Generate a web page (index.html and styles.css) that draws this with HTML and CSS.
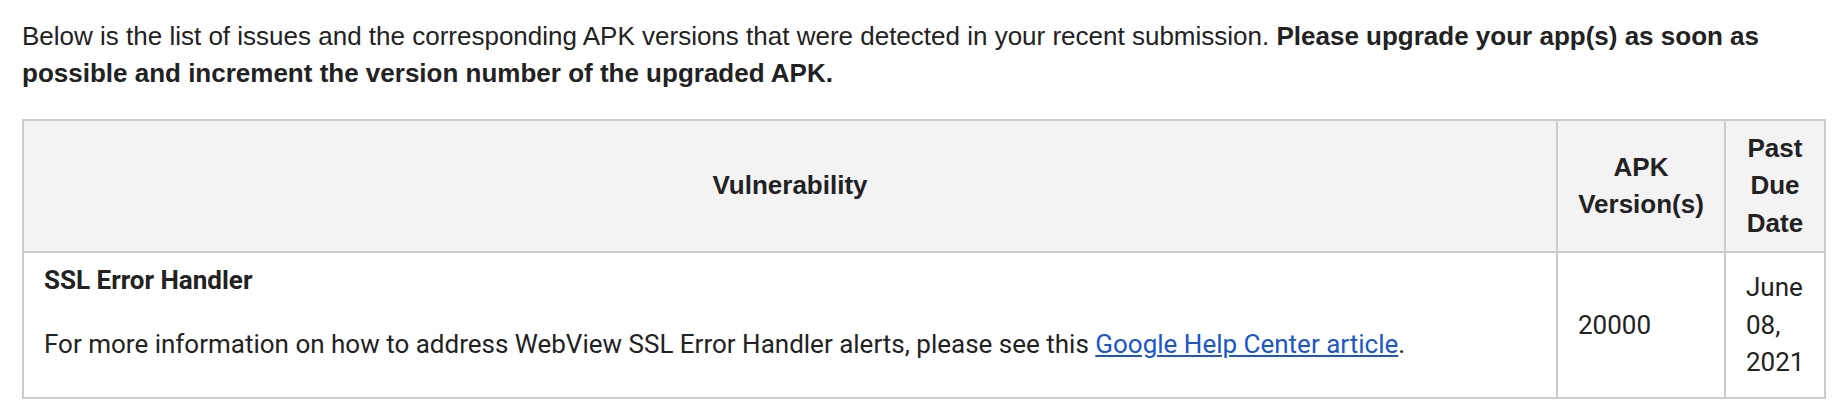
FILE: index.html
```html
<!DOCTYPE html>
<html lang="en">
<head>
<meta charset="utf-8">
<title>Issues</title>
<link rel="stylesheet" href="styles.css">
</head>
<body>
<div class="page">
  <p class="intro">Below is the list of issues and the corresponding APK versions that were detected in your recent submission. <strong>Please upgrade your app(s) as soon as possible and increment the version number of the upgraded APK.</strong></p>
  <table class="issues">
    <colgroup>
      <col class="col-vuln">
      <col class="col-apk">
      <col class="col-date">
    </colgroup>
    <thead>
      <tr>
        <th>Vulnerability</th>
        <th>APK Version(s)</th>
        <th>Past Due Date</th>
      </tr>
    </thead>
    <tbody>
      <tr>
        <td class="cell-vuln">
          <h4 class="vuln-title">SSL Error Handler</h4>
          <p class="vuln-text">For more information on how to address WebView SSL Error Handler alerts, please see this <a href="#">Google Help Center article</a>.</p>
        </td>
        <td class="cell-apk">20000</td>
        <td class="cell-date">June 08, 2021</td>
      </tr>
    </tbody>
  </table>
</div>
</body>
</html>
```

FILE: styles.css
```css
html, body {
  margin: 0;
  padding: 0;
  background: #ffffff;
}

.page {
  padding: 0 18px 0 22px;
  color: #222222;
  font-family: "Liberation Sans", Arial, sans-serif;
}

.intro {
  margin: 18px 0 27px 0;
  font-size: 26px;
  line-height: 37px;
}

.intro strong {
  font-weight: bold;
}

.issues {
  width: 1804px;
  border-collapse: collapse;
  table-layout: fixed;
  border: 2px solid #cccccc;
}

.col-vuln { width: auto; }
.col-apk { width: 168px; }
.col-date { width: 100px; }

.issues th {
  background: #f3f3f3;
  border: 2px solid #cccccc;
  padding: 9px 20px;
  font-family: "Liberation Sans", Arial, sans-serif;
  font-weight: bold;
  font-size: 26px;
  line-height: 37.3px;
  text-align: center;
  vertical-align: middle;
  color: #222222;
}

.issues td {
  border: 2px solid #cccccc;
  padding: 9px 20px;
  font-family: Roboto, "Liberation Sans", sans-serif;
  font-size: 26px;
  line-height: 37.3px;
  text-align: left;
  vertical-align: middle;
  color: #222222;
}

.cell-vuln {
  vertical-align: top;
}

.vuln-title {
  margin: 0 0 27px 0;
  font-size: 26px;
  font-weight: bold;
}

.vuln-text {
  margin: 0 0 25px 0;
}

.vuln-text a {
  color: #1a56cc;
  text-decoration: underline;
}
```
